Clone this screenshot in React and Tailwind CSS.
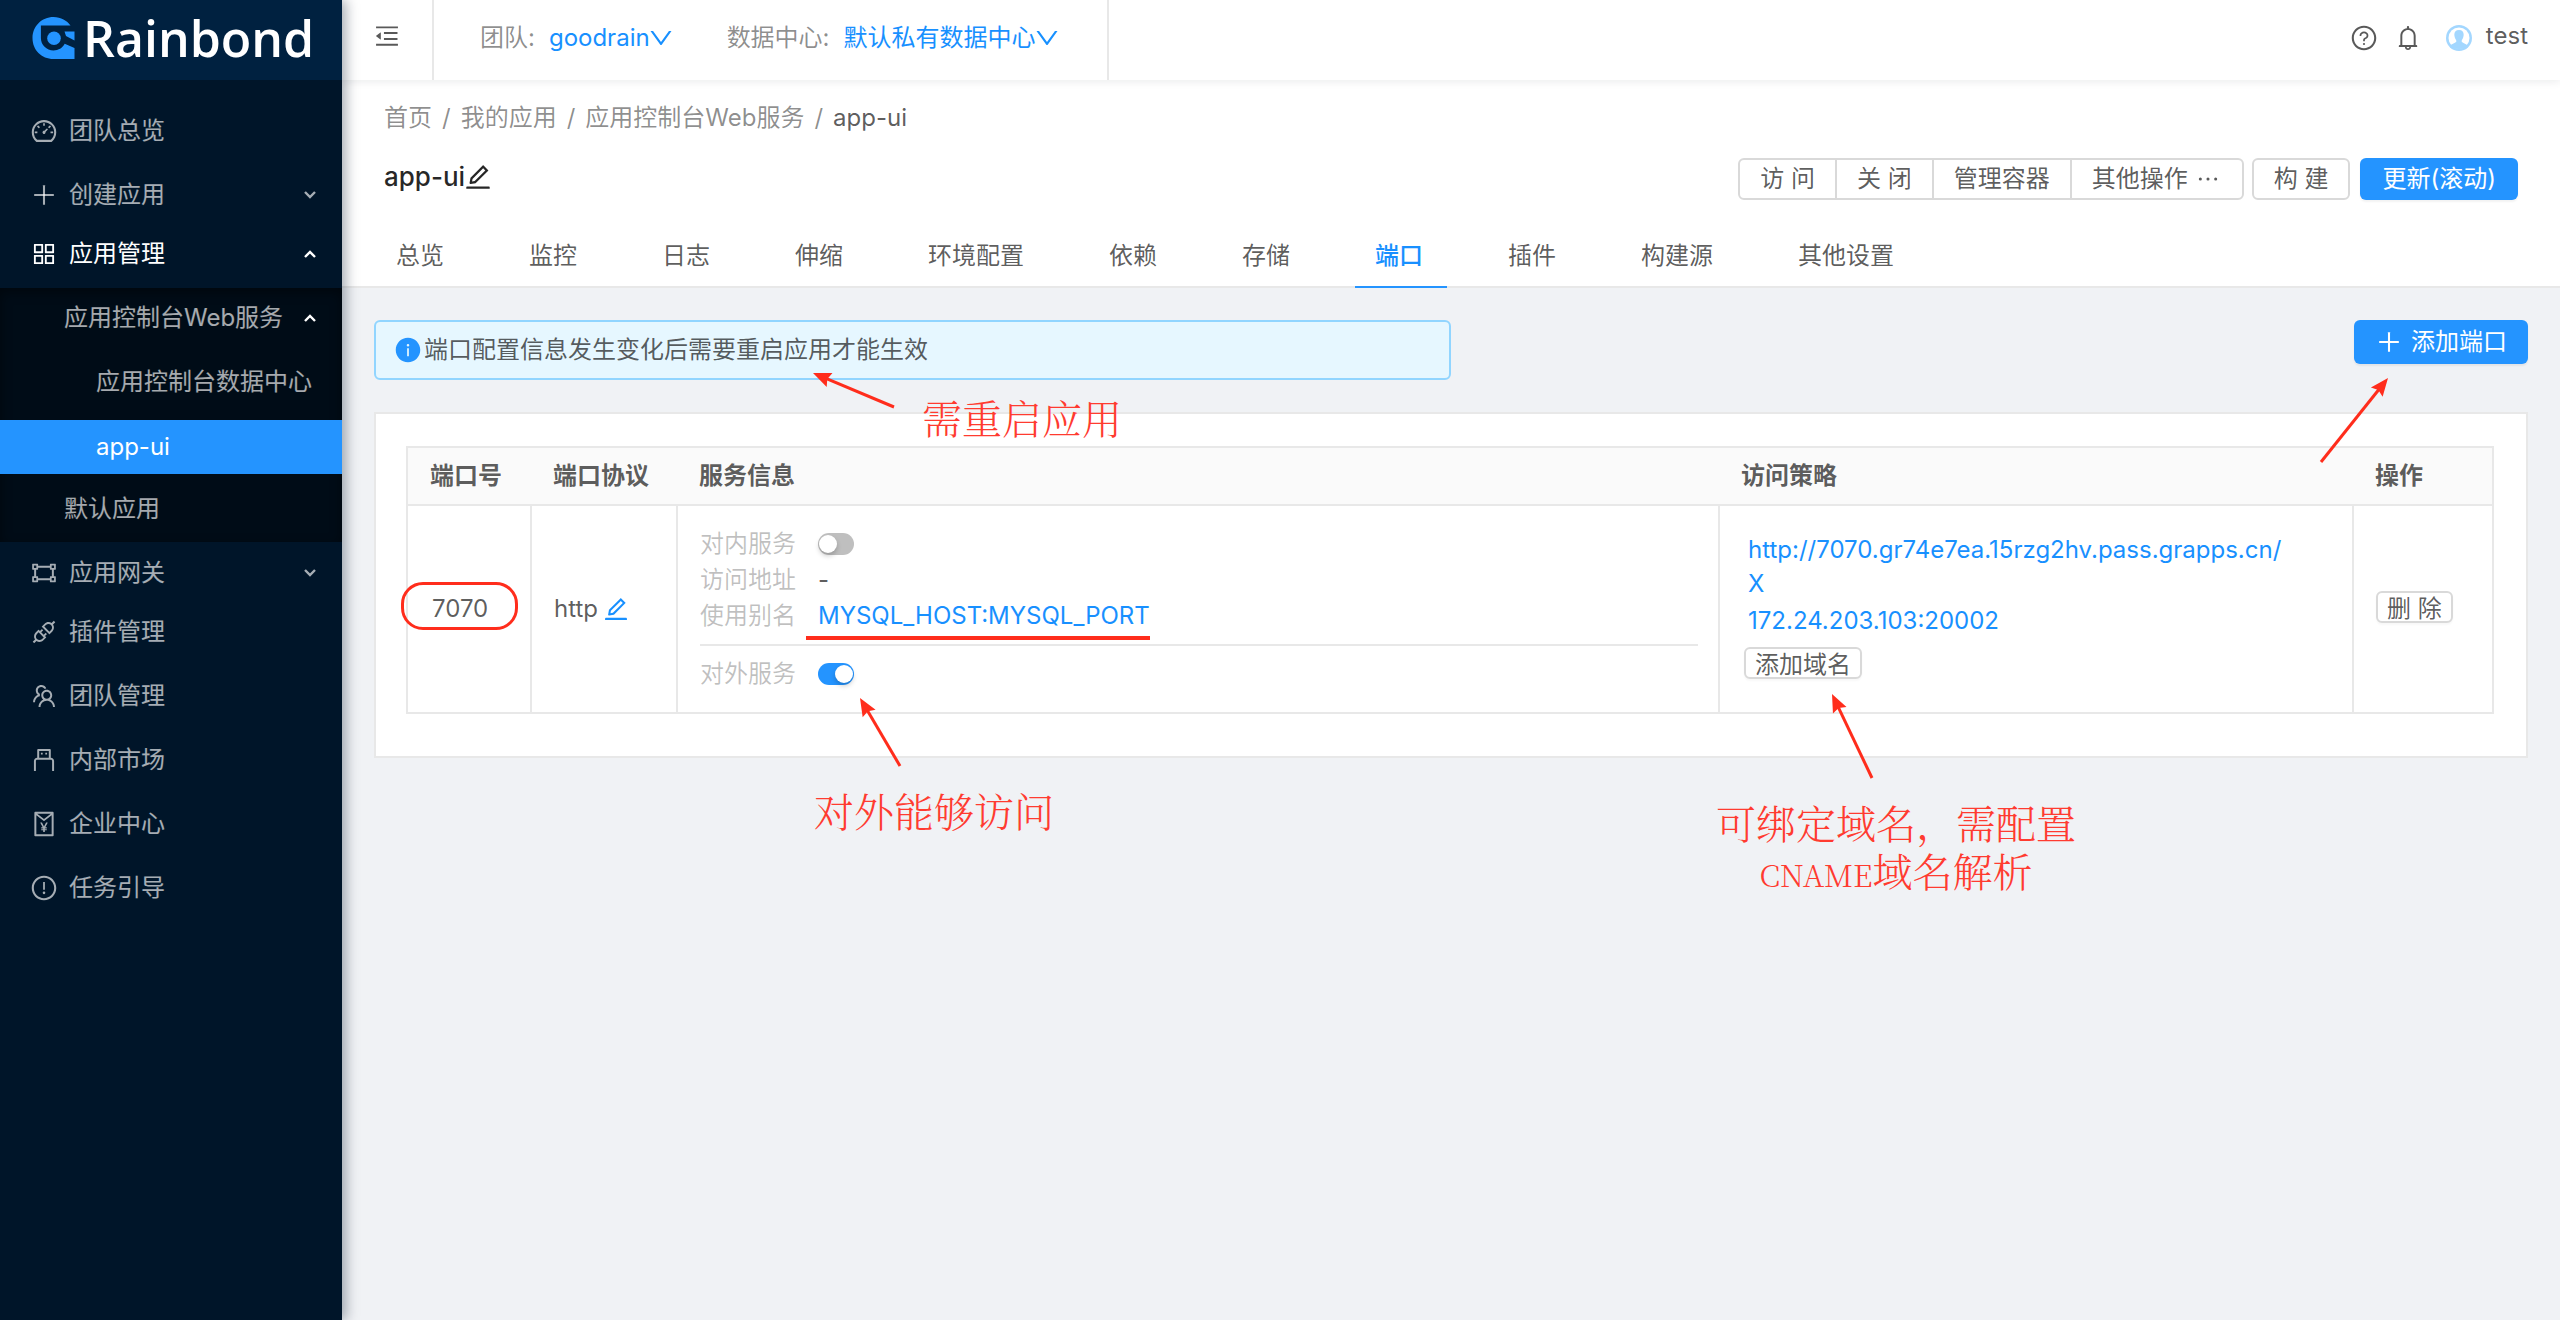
import React from 'react';
import {
  AiFillInfoCircle,
  AiOutlineApi,
  AiOutlineAppstore,
  AiOutlineBell,
  AiOutlineDashboard,
  AiOutlineDown,
  AiOutlineEdit,
  AiOutlineEllipsis,
  AiOutlineExclamationCircle,
  AiOutlineGateway,
  AiOutlineMenuFold,
  AiOutlinePlus,
  AiOutlineQuestionCircle,
  AiOutlineRedEnvelope,
  AiOutlineTeam,
  AiOutlineUsb,
} from 'react-icons/ai';

const Caret = ({ up }) => (
  <svg viewBox="0 0 12 8" className="w-3 h-2 mr-[26px] shrink-0" fill="none" stroke="currentColor" strokeWidth="2.4">
    <path d={up ? 'M1 7L6 2L11 7' : 'M1 1L6 6L11 1'} />
  </svg>
);

const MenuItem = ({ icon: Icon, label, caret, className = '' }) => (
  <a href="#" className={`flex items-center h-[54px] pl-[30px] ${className}`}>
    {Icon && <Icon className="w-7 h-7 mr-[11px] shrink-0" />}
    <span className="flex-1 whitespace-nowrap">{label}</span>
    {caret && <Caret up={caret === 'up'} />}
  </a>
);

const Logo = () => (
  <div className="flex items-center h-20 pl-8 pb-1 bg-[#002140]">
    <svg viewBox="0 0 42 42" className="w-[43px] h-[42px] shrink-0">
      <path
        fill="#2494ff"
        d="M21 0C28.500 0 34.500 3.500 38 8.600H8.400V21C8.400 28 14 33.400 21 33.400C26 33.400 30 31 32.200 26.800L42 31V42H21C9 42 0 33 0 21C0 9.500 9 0 21 0Z"
      />
      <path fill="#2494ff" d="M32 14.500H42V23.500L33.500 19Z" />
      <circle cx="21.500" cy="21.200" r="6.800" fill="#2494ff" />
    </svg>
    <span className="ml-2 font-['Open_Sans',sans-serif] font-semibold text-[50px] leading-none text-white">
      Rainbond
    </span>
  </div>
);

const Sidebar = () => (
  <nav className="relative z-20 w-[342px] shrink-0 bg-[#001529] text-white/65 shadow-[4px_0_12px_rgba(0,21,41,0.35)]">
    <Logo />
    <MenuItem icon={AiOutlineDashboard} label="团队总览" className="mt-6" />
    <MenuItem icon={AiOutlinePlus} label="创建应用" caret="down" className="mt-[10px]" />
    <MenuItem icon={AiOutlineAppstore} label="应用管理" caret="up" className="mt-[5px] mb-[7px] text-white" />
    <div className="flex flex-col pt-[3px] pb-[6px] bg-[#000c17] shadow-[inset_0_4px_12px_rgba(0,0,0,0.45)]">
      <a href="#" className="flex items-center h-[54px] pl-16">
        <span className="flex-1 whitespace-nowrap">应用控制台Web服务</span>
        <span className="text-white flex"><Caret up /></span>
      </a>
      <a href="#" className="flex items-center h-[54px] mt-[10px] pl-24 whitespace-nowrap">应用控制台数据中心</a>
      <a href="#" className="flex items-center h-[54px] mt-[11px] pl-24 bg-[#2494ff] text-white">app-ui</a>
      <a href="#" className="flex items-center h-[54px] mt-2 pl-16">默认应用</a>
    </div>
    <MenuItem icon={AiOutlineGateway} label="应用网关" caret="down" className="mt-1" />
    <MenuItem icon={AiOutlineApi} label="插件管理" className="mt-[5px]" />
    <MenuItem icon={AiOutlineTeam} label="团队管理" className="mt-[10px]" />
    <MenuItem icon={AiOutlineUsb} label="内部市场" className="mt-[10px]" />
    <MenuItem icon={AiOutlineRedEnvelope} label="企业中心" className="mt-[10px]" />
    <MenuItem icon={AiOutlineExclamationCircle} label="任务引导" className="mt-[10px]" />
  </nav>
);

const TopBar = () => (
  <header className="relative z-10 flex items-center h-20 bg-white shadow-[0_2px_8px_rgba(0,21,41,0.08)]">
    <button type="button" aria-label="收起菜单" className="flex items-center h-full w-[92px] pl-[31px] pb-2 border-r-2 border-[#e8e8e8]">
      <AiOutlineMenuFold className="w-7 h-7" />
    </button>
    <div className="flex items-center h-full pl-[46px] pr-[46px] pb-1 border-r-2 border-[#e8e8e8] text-black/45">
      <span>团队:</span>
      <a href="#" className="flex items-center ml-[14px] text-[#1890ff]">
        goodrain
        <AiOutlineDown className="w-7 h-7 -ml-[3px]" />
      </a>
      <span className="ml-[52px]">数据中心:</span>
      <a href="#" className="flex items-center ml-[14px] text-[#1890ff]">
        默认私有数据中心
        <AiOutlineDown className="w-7 h-7 -ml-[3px]" />
      </a>
    </div>
    <div className="flex items-center ml-auto mr-8 pb-1">
      <AiOutlineQuestionCircle className="w-7 h-7" />
      <AiOutlineBell className="w-7 h-7 ml-4" />
      <svg viewBox="0 0 26 26" className="w-[26px] h-[26px] ml-6">
        <circle cx="13" cy="13" r="13" fill="#a3d7ff" />
        <circle cx="13" cy="13" r="10.500" fill="#fff" />
        <path
          fill="#a3d7ff"
          d="M13 5C16.500 5 18 7.500 17.600 10.500C17.400 13 16 14.500 15.600 16C15.500 18 20 18.500 21.500 20.500A12 12 0 0 1 4.500 20.500C6 18.500 10.500 18 10.400 16C10 14.500 8.600 13 8.400 10.500C8 7.500 9.500 5 13 5Z"
        />
      </svg>
      <span className="ml-[14px] pb-1">test</span>
    </div>
  </header>
);

const tabs = ['总览', '监控', '日志', '伸缩', '环境配置', '依赖', '存储', '端口', '插件', '构建源', '其他设置'];

const groupButton = 'h-[42px] px-5 border-2 border-[#d9d9d9] bg-white whitespace-nowrap';

const PageHeader = () => (
  <div className="pt-5 bg-white border-b-2 border-[#e8e8e8]">
    <div className="flex items-center h-9 pl-[42px] text-black/45">
      <a href="#">首页</a>
      <span className="mx-[10px]">/</span>
      <a href="#">我的应用</a>
      <span className="mx-[10px]">/</span>
      <a href="#">应用控制台Web服务</a>
      <span className="mx-[10px]">/</span>
      <span className="text-black/65">app-ui</span>
    </div>
    <div className="flex items-center justify-between pl-[42px] pr-[42px] mt-[22px]">
      <h1 className="flex items-center pb-1 text-[26px] font-medium text-black/85">
        app-ui
        <button type="button" aria-label="编辑名称"><AiOutlineEdit className="w-[30px] h-[30px] -ml-[2px]" /></button>
      </h1>
      <div className="flex">
        <button type="button" className={`${groupButton} rounded-l-md`}>访 问</button>
        <button type="button" className={`${groupButton} -ml-[2px]`}>关 闭</button>
        <button type="button" className={`${groupButton} -ml-[2px]`}>管理容器</button>
        <button type="button" className={`${groupButton} -ml-[2px] rounded-r-md flex items-center gap-[6px]`}>
          其他操作
          <AiOutlineEllipsis className="w-7 h-7" />
        </button>
        <button type="button" className={`${groupButton} ml-2 rounded-md`}>构 建</button>
        <button type="button" className="h-[42px] px-[22px] ml-[10px] rounded-md bg-[#2494ff] text-white whitespace-nowrap shadow-[0_2px_2px_rgba(0,0,0,0.05)]">
          更新(滚动)
        </button>
      </div>
    </div>
    <div className="flex gap-[41px] pl-[34px] mt-6">
      {tabs.map((tab) => (
        <a
          key={tab}
          href="#"
          className={`flex items-center h-16 pl-5 pr-6 pt-[2px] -mb-[2px] border-b-2 whitespace-nowrap ${
            tab === '端口' ? 'border-[#2494ff] text-[#1890ff] font-medium' : 'border-transparent'
          }`}
        >
          {tab}
        </a>
      ))}
    </div>
  </div>
);

// Red call-out arrow; the point of the head sits at (x2, y2) of the box
const Arrow = ({ x1, y1, x2, y2, className }) => {
  const angle = (Math.atan2(y2 - y1, x2 - x1) * 180) / Math.PI;
  const length = Math.hypot(x2 - x1, y2 - y1);
  return (
    <svg viewBox="0 0 100 100" className={`absolute w-[100px] h-[100px] overflow-visible pointer-events-none ${className}`}>
      <g transform={`translate(${x2} ${y2}) rotate(${angle})`} fill="#ff2d1c">
        <rect x={-length} y="-1.500" width={length - 14} height="3" />
        <path d="M0 0L-18 -7.500L-15.500 0L-18 7.500Z" />
      </g>
    </svg>
  );
};

const Note = ({ className, children }) => (
  <p
    className={`absolute z-10 text-[40px] leading-[48px] text-center text-[#ff3b30] font-light whitespace-nowrap font-['Noto_Serif_CJK_SC','Noto_Sans_CJK_SC',serif] ${className}`}
  >
    {children}
  </p>
);

const Toggle = ({ id, on }) => (
  <span className="relative flex w-9 h-[22px]">
    <input
      id={id}
      type="checkbox"
      role="switch"
      defaultChecked={on}
      className="peer appearance-none w-9 h-[22px] rounded-full bg-[#bfbfbf] checked:bg-[#2494ff]"
    />
    <span className="absolute top-[2px] left-[1px] peer-checked:left-[17px] w-[18px] h-[18px] rounded-full bg-white shadow-[0_3px_5px_rgba(0,0,0,0.2)] pointer-events-none" />
  </span>
);

const smallButton = 'h-8 px-[9px] border-2 border-[#d9d9d9] rounded-md bg-white leading-[32px] whitespace-nowrap shadow-[0_2px_2px_rgba(0,0,0,0.03)]';

const PortTable = () => (
  <table className="w-full table-fixed border-2 border-[#e8e8e8] border-collapse text-left">
    <colgroup>
      <col className="w-[124px]" />
      <col className="w-[146px]" />
      <col />
      <col className="w-[634px]" />
      <col className="w-[140px]" />
    </colgroup>
    <thead>
      <tr className="h-[58px] bg-[#fafafa] border-b-2 border-[#e8e8e8]">
        {['端口号', '端口协议', '服务信息', '访问策略', '操作'].map((head) => (
          <th key={head} className="pl-[22px] font-semibold">{head}</th>
        ))}
      </tr>
    </thead>
    <tbody>
      <tr className="h-[208px]">
        <td className="relative pl-6 border-r-2 border-[#e8e8e8]">
          7070
          <span className="absolute top-[76px] -left-[7px] w-[117px] h-12 border-3 border-[#ff2d1c] rounded-[22px]" />
        </td>
        <td className="pl-[22px] border-r-2 border-[#e8e8e8]">
          <span className="flex items-center gap-1">
            http
            <button type="button" aria-label="编辑协议" className="text-[#1890ff]"><AiOutlineEdit className="w-7 h-7" /></button>
          </span>
        </td>
        <td className="pl-[22px] pr-5 border-r-2 border-[#e8e8e8]">
          <div className="grid grid-cols-[96px_1fr] gap-x-[22px] auto-rows-[36px] items-center pb-[10px] border-b-2 border-[#e8e8e8]">
            <label htmlFor="inner" className="text-black/25">对内服务</label>
            <Toggle id="inner" />
            <span className="text-black/25">访问地址</span>
            <span>-</span>
            <span className="text-black/25">使用别名</span>
            <a href="#" className="relative justify-self-start text-[#1890ff]">
              MYSQL_HOST:MYSQL_PORT
              <span className="absolute -left-3 right-0 top-[38px] h-1 bg-[#ff2d1c]" />
            </a>
          </div>
          <div className="relative grid grid-cols-[96px_1fr] gap-x-[22px] items-center h-9 mt-[10px]">
            <label htmlFor="outer" className="text-black/25">对外服务</label>
            <Toggle id="outer" on />
            <Arrow x1={60} y1={88} x2={20} y2={20} className="left-[140px] top-[22px]" />
            <Note className="left-[114px] top-[130px]">对外能够访问</Note>
          </div>
        </td>
        <td className="pl-7 pb-[6px] border-r-2 border-[#e8e8e8]">
          <a href="#" className="block leading-[34px] text-[#1890ff]">http://7070.gr74e7ea.15rzg2hv.pass.grapps.cn/</a>
          <a href="#" className="block leading-[34px] text-[#1890ff]">X</a>
          <a href="#" className="block mt-[2px] leading-[36px] text-[#1890ff]">172.24.203.103:20002</a>
          <div className="relative -ml-1 mt-2">
            <button type="button" className={`${smallButton} block`}>添加域名</button>
            <Arrow x1={60} y1={104} x2={20} y2={20} className="left-[68px] top-[27px]" />
            <Note className="-left-7 top-[151px]">
              可绑定域名，需配置
              <br />
              <span className="text-[30px]">CNAME</span>域名解析
            </Note>
          </div>
        </td>
        <td className="pl-[22px]">
          <button type="button" className={smallButton}>删 除</button>
        </td>
      </tr>
    </tbody>
  </table>
);

const App = () => {
  return (
    <div className="flex min-h-screen bg-[#f0f2f5] text-[24px] leading-[36px] text-black/65 font-[Inter,'Noto_Sans_CJK_SC',sans-serif]">
      <Sidebar />
      <div className="flex-1 min-w-0">
        <TopBar />
        <PageHeader />
        <main className="px-8 pt-8">
          <div className="flex items-start justify-between">
            <div className="relative flex items-center w-1/2 h-[60px] pl-[18px] border-2 border-[#91d5ff] rounded-md bg-[#e6f7ff]">
              <AiFillInfoCircle className="w-7 h-7 mr-[2px] text-[#2494ff]" />
              端口配置信息发生变化后需要重启应用才能生效
              <Arrow x1={101} y1={54} x2={20} y2={20} className="left-[417px] top-[31px]" />
              <Note className="left-[546px] top-[71px]">需重启应用</Note>
            </div>
            <div className="relative">
              <button type="button" className="flex items-center h-11 px-[21px] rounded-md bg-[#2494ff] text-white shadow-[0_2px_2px_rgba(0,0,0,0.06)]">
                <AiOutlinePlus className="w-7 h-7 mr-2" />
                添加端口
              </button>
              <Arrow x1={0} y1={84} x2={67} y2={0} className="-left-[33px] top-[58px]" />
            </div>
          </div>
          <section className="mt-8 pl-[30px] pr-8 pt-8 pb-[42px] bg-white border-2 border-[#e8e8e8]">
            <PortTable />
          </section>
        </main>
      </div>
    </div>
  );
};

export default App;
